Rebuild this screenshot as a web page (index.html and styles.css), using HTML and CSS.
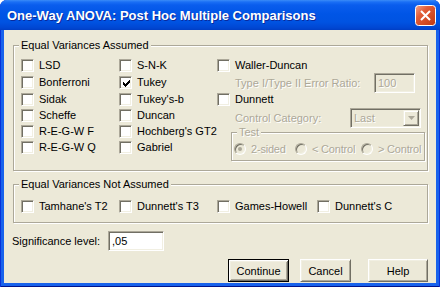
FILE: index.html
```html
<!DOCTYPE html>
<html lang="en">
<head>
    <meta charset="UTF-8">
    <title>One-Way ANOVA: Post Hoc Multiple Comparisons</title>
    <link rel="stylesheet" href="styles.css">
</head>
<body>
    <div class="window">
        <div class="titlebar">
            <span class="title">One-Way ANOVA: Post Hoc Multiple Comparisons</span>
            <span class="close">
                <svg width="21" height="21" viewBox="0 0 21 21">
                    <defs>
                        <linearGradient id="closeFill" x1="0" y1="0" x2="1" y2="1">
                            <stop offset="0" stop-color="#f3a58c"/>
                            <stop offset=".35" stop-color="#e25d38"/>
                            <stop offset="1" stop-color="#c1380f"/>
                        </linearGradient>
                    </defs>
                    <rect x=".5" y=".5" width="20" height="20" rx="3" fill="url(#closeFill)" stroke="#fff"/>
                    <path d="M6 6l9 9M15 6l-9 9" stroke="#fff" stroke-width="2"/>
                </svg>
            </span>
        </div>

        <div class="client">
            <div class="group group-assumed">
                <span class="group-title">Equal Variances Assumed</span>
                <div class="assumed-body">
                    <div class="col-list">
                        <div class="opt"><span class="box"></span><span class="text">LSD</span></div>
                        <div class="opt"><span class="box"></span><span class="text">Bonferroni</span></div>
                        <div class="opt"><span class="box"></span><span class="text">Sidak</span></div>
                        <div class="opt"><span class="box"></span><span class="text">Scheffe</span></div>
                        <div class="opt"><span class="box"></span><span class="text">R-E-G-W F</span></div>
                        <div class="opt"><span class="box"></span><span class="text">R-E-G-W Q</span></div>
                    </div>
                    <div class="col-list">
                        <div class="opt"><span class="box"></span><span class="text">S-N-K</span></div>
                        <div class="opt">
                            <span class="box">
                                <svg class="tick" width="7" height="7" viewBox="0 0 7 7"><path d="M0 2h1v1h1v1h1v-1h1v-1h1v-1h1v-1h1V3h-1v1h-1v1h-1v1h-1v1h-1v-1h-1v-1h-1z"/></svg>
                            </span>
                            <span class="text">Tukey</span>
                        </div>
                        <div class="opt"><span class="box"></span><span class="text">Tukey's-b</span></div>
                        <div class="opt"><span class="box"></span><span class="text">Duncan</span></div>
                        <div class="opt"><span class="box"></span><span class="text">Hochberg's GT2</span></div>
                        <div class="opt"><span class="box"></span><span class="text">Gabriel</span></div>
                    </div>
                    <div class="col-options">
                        <div class="opt"><span class="box"></span><span class="text">Waller-Duncan</span></div>
                        <div class="sub-row ratio-row">
                            <span class="sub-label disabled">Type I/Type II Error Ratio:</span>
                            <span class="field field-off ratio-field">100</span>
                        </div>
                        <div class="opt"><span class="box"></span><span class="text">Dunnett</span></div>
                        <div class="sub-row control-row">
                            <span class="sub-label disabled">Control Category:</span>
                            <span class="field field-off combo">
                                <span class="combo-text">Last</span>
                                <span class="combo-btn">
                                    <svg width="7" height="4" viewBox="0 0 7 4"><path d="M0 0h7l-3.5 4z" fill="#aca899"/></svg>
                                </span>
                            </span>
                        </div>
                        <div class="group group-test">
                            <span class="group-title disabled">Test</span>
                            <div class="radio-row">
                                <div class="radio-opt radio-first"><span class="radio on"></span><span class="text disabled">2-sided</span></div>
                                <div class="radio-opt radio-second"><span class="radio"></span><span class="text disabled">&lt; Control</span></div>
                                <div class="radio-opt"><span class="radio"></span><span class="text disabled">&gt; Control</span></div>
                            </div>
                        </div>
                    </div>
                </div>
            </div>

            <div class="group group-not">
                <span class="group-title">Equal Variances Not Assumed</span>
                <div class="not-body">
                    <div class="opt not-a"><span class="box"></span><span class="text">Tamhane's T2</span></div>
                    <div class="opt not-b"><span class="box"></span><span class="text">Dunnett's T3</span></div>
                    <div class="opt not-c"><span class="box"></span><span class="text">Games-Howell</span></div>
                    <div class="opt"><span class="box"></span><span class="text">Dunnett's C</span></div>
                </div>
            </div>

            <div class="sig-row">
                <label class="sig-label" for="sig">Significance level:</label>
                <span class="field sig-field" id="sig">,05</span>
            </div>

            <div class="buttons">
                <button class="btn btn-default btn-continue">Continue</button>
                <button class="btn btn-cancel">Cancel</button>
                <button class="btn btn-help">Help</button>
            </div>
        </div>
    </div>
</body>
</html>
```

FILE: styles.css
```css
body {
    margin: 0;
    background: #fff;
}

.window {
    width: 440px;
    height: 287px;
    box-sizing: border-box;
    display: flex;
    flex-direction: column;
    background: #1862ec;
    border-radius: 7px 7px 0 0;
    overflow: hidden;
    box-shadow: inset 1px 0 #0831d9, inset -1px 0 #0831d9, inset 0 -1px #00138c;
}

.titlebar {
    height: 30px;
    flex: none;
    display: flex;
    justify-content: space-between;
    align-items: flex-start;
    padding: 0 4px 0 7px;
    background: linear-gradient(#3b8cf7 0, #1a6ff5 2px, #0a5ded 5px, #0055e6 14px, #0053e2 22px, #0046d2 28px, #003ec4 30px);
}

.title {
    font: bold 13px "Liberation Sans", Arial, sans-serif;
    color: #fff;
    line-height: 30px;
    padding-top: 1px;
    text-shadow: 1px 1px #0a2a9c;
    white-space: nowrap;
}

.close {
    display: block;
    width: 21px;
    height: 21px;
    margin-top: 5px;
}

.close svg {
    display: block;
}

.client {
    flex: 1;
    margin: 0 4px 4px;
    padding: 15px 8px 0 9px;
    background: #ece9d8;
    font: 11px "Liberation Sans", Arial, sans-serif;
    color: #000;
}

/* group boxes */
.group {
    border: 1px solid #aca899;
    box-shadow: inset 1px 1px #fff, 1px 1px #fff;
}

.group-title {
    display: table;
    margin: -7px 0 0 -2px;
    padding: 0 2px;
    line-height: 13px;
    background: #ece9d8;
}

.group-assumed {
    padding: 0 0 9px 7px;
}

.assumed-body {
    display: flex;
    margin-top: 7px;
}

.col-list {
    width: 98px;
    display: grid;
    grid-template-rows: 17px 17px 16px 16px 16px 13px;
}

.col-options {
    width: 210px;
    display: flex;
    flex-direction: column;
}

.opt {
    display: flex;
    align-items: flex-start;
    height: 13px;
}

.text {
    margin-left: 5px;
    line-height: 13px;
    white-space: nowrap;
}

.disabled {
    color: #aca899;
    text-shadow: 1px 1px #fff;
}

/* checkbox */
.box {
    box-sizing: border-box;
    width: 13px;
    height: 13px;
    flex: none;
    display: flex;
    align-items: center;
    justify-content: center;
    background: #fff;
    border: 1px solid;
    border-color: #aca899 #fff #fff #aca899;
    box-shadow: inset 1px 1px #716f64, inset -1px -1px #f1efe2;
}

.tick {
    display: block;
    fill: #000;
    margin: 1px 0 0 1px;
}

/* edit fields */
.field {
    box-sizing: border-box;
    display: block;
    height: 20px;
    padding-left: 3px;
    line-height: 18px;
    background: #fff;
    border: 1px solid;
    border-color: #aca899 #fff #fff #aca899;
    box-shadow: inset 1px 1px #716f64, inset -1px -1px #f1efe2;
}

.field-off {
    background: #ece9d8;
    color: #aca899;
    text-shadow: 1px 1px #fff;
}

.sub-row {
    display: flex;
    align-items: center;
    height: 20px;
    padding-left: 18px;
}

.ratio-row {
    margin-top: 1px;
}

.ratio-row .sub-label {
    width: 139px;
}

.ratio-field {
    width: 41px;
}

.control-row {
    margin-top: 2px;
}

.control-row .sub-label {
    width: 115px;
}

.combo {
    width: 71px;
    display: flex;
    justify-content: space-between;
    padding: 1px 1px 1px 3px;
}

.combo-text {
    line-height: 16px;
}

.combo-btn {
    box-sizing: border-box;
    width: 16px;
    height: 16px;
    display: flex;
    align-items: center;
    justify-content: center;
    border: 1px solid;
    border-color: #f1efe2 #716f64 #716f64 #f1efe2;
    box-shadow: inset 1px 1px #fff, inset -1px -1px #aca899;
}

/* Test sub group */
.group-test {
    width: 194px;
    box-sizing: border-box;
    margin: 4px 0 0 14px;
    padding: 0 0 5px 2px;
}

.group-test .group-title {
    margin-left: 3px;
}

.radio-row {
    display: flex;
    margin-top: 4px;
}

.radio-opt {
    display: flex;
    align-items: center;
    height: 12px;
}

.radio-first {
    width: 61px;
}

.radio-second {
    width: 66px;
}

.radio {
    box-sizing: border-box;
    width: 12px;
    height: 12px;
    flex: none;
    display: flex;
    align-items: center;
    justify-content: center;
    border-radius: 50%;
    background: #ece9d8;
    border: 1px solid;
    border-color: #aca899 #fff #fff #aca899;
    box-shadow: inset 1px 1px #716f64, inset -1px -1px #f1efe2;
}

.radio.on::after {
    content: "";
    width: 4px;
    height: 4px;
    border-radius: 50%;
    background: #aca899;
}

.radio-opt .text {
    margin-left: 5px;
    letter-spacing: -0.2px;
}

/* second group */
.group-not {
    margin-top: 13px;
    padding: 0 0 9px 7px;
}

.not-body {
    display: flex;
    margin-top: 9px;
}

.not-a,
.not-b {
    width: 98px;
}

.not-c {
    width: 100px;
}

/* significance */
.sig-row {
    display: flex;
    align-items: center;
    margin: 8px 0 0 -1px;
}

.sig-label {
    width: 96px;
}

.sig-field {
    width: 56px;
}

/* buttons */
.buttons {
    display: flex;
    justify-content: flex-end;
    margin-top: 8px;
}

.btn {
    box-sizing: border-box;
    height: 23px;
    padding: 0;
    font: 11px "Liberation Sans", Arial, sans-serif;
    color: #000;
    background: #ece9d8;
    border: 1px solid;
    border-color: #fff #716f64 #716f64 #fff;
    box-shadow: inset 1px 1px #f1efe2, inset -1px -1px #aca899;
}

.btn-default {
    border: 1px solid #000;
    box-shadow: inset 1px 1px #fff, inset -1px -1px #716f64, inset 2px 2px #f1efe2, inset -2px -2px #aca899;
}

.btn-continue {
    width: 61px;
}

.btn-cancel {
    width: 51px;
    margin-left: 11px;
}

.btn-help {
    width: 60px;
    margin-left: 17px;
}
```
